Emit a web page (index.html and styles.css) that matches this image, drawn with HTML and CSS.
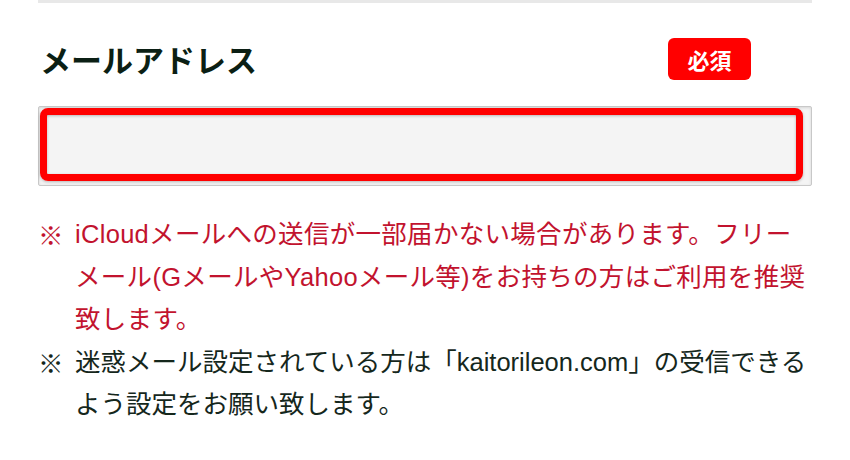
FILE: index.html
```html
<!DOCTYPE html>
<html lang="ja">
<head>
<meta charset="utf-8">
<link rel="stylesheet" href="styles.css">
</head>
<body>
<div class="wrap">
  <div class="rule"></div>
  <div class="head">
    <h2 class="label">メールアドレス</h2>
    <span class="badge">必須</span>
  </div>
  <div class="field">
    <input class="input" type="email" aria-label="メールアドレス">
    <div class="mark"></div>
  </div>
  <ul class="notes">
    <li class="note red"><span class="kome">※</span><span class="txt">iCloudメールへの送信が一部届かない場合があります。フリーメール(GメールやYahooメール等)をお持ちの方はご利用を推奨致します。</span></li>
    <li class="note"><span class="kome">※</span><span class="txt">迷惑メール設定されている方は「kaitorileon.com」の受信できるよう設定をお願い致します。</span></li>
  </ul>
</div>
</body>
</html>
```
FILE: styles.css
```css
html, body { margin: 0; padding: 0; background: #fff; }
body { font-family: "Liberation Sans", "Noto Sans CJK JP", sans-serif; }
.wrap { width: 774px; margin-left: 38px; }
.rule { height: 3px; background: #e8e8e8; }
.head { display: flex; align-items: center; justify-content: space-between; padding-right: 61px; margin-top: 35px; height: 42px; }
.label { margin: 0 0 0 2px; font-family: "Noto Sans CJK JP", sans-serif; font-weight: 700; font-size: 31px; color: #0b1f14; line-height: 38px; }
.badge { background: #ff0000; color: #fff; font-family: "Noto Sans CJK JP", sans-serif; font-weight: 700; font-size: 22px; line-height: 42px; height: 42px; width: 83px; text-align: center; border-radius: 6px; }
.field { position: relative; margin-top: 26px; height: 80px; }
.input { box-sizing: border-box; display: block; width: 100%; height: 80px; margin: 0; border: 1px solid #c8c8c8; border-radius: 2px; background: #f4f4f4; box-shadow: inset 0 1px 3px rgba(0,0,0,0.12); outline: none; }
.mark { position: absolute; left: 2px; top: 2px; width: 763px; height: 73px; box-sizing: border-box; border: 7px solid #ff0000; border-radius: 8px; box-shadow: 0 1px 3px rgba(0,0,0,0.25), inset 0 1px 3px rgba(0,0,0,0.25); }
.notes { list-style: none; margin: 27px 0 0; padding: 0; font-size: 25.5px; line-height: 42.5px; color: #15271c; }
.note { display: flex; letter-spacing: 0; }
.note.red { color: #c2132e; letter-spacing: 0.3px; }
.kome { flex: 0 0 37px; font-family: "Noto Sans CJK JP", sans-serif; letter-spacing: 0; }
.txt { flex: 1; }
```
